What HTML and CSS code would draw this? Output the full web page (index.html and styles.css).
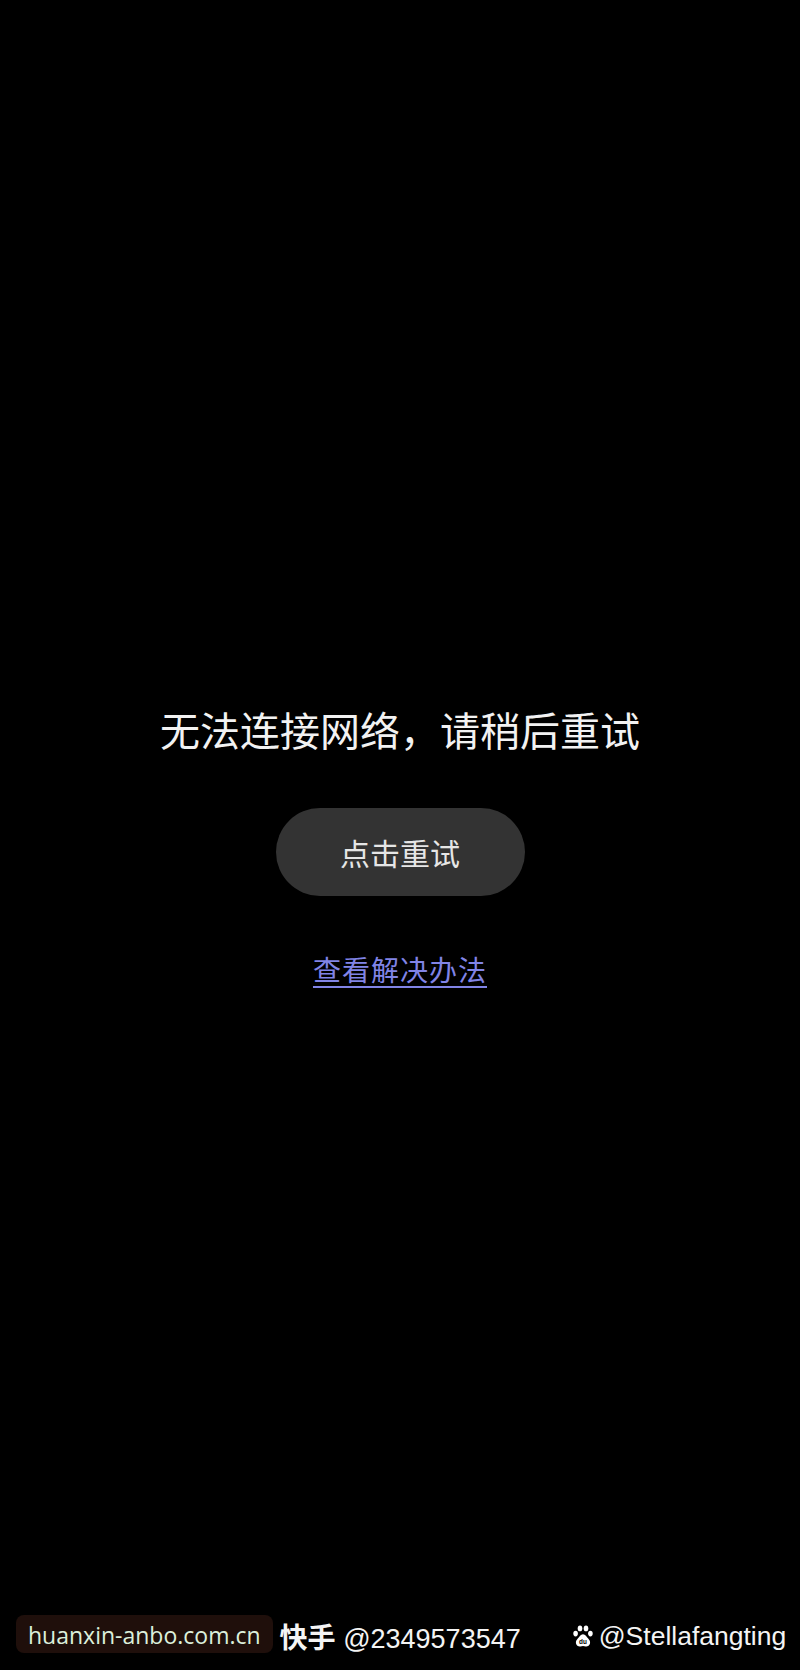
FILE: index.html
```html
<!DOCTYPE html>
<html lang="zh-CN">
<head>
<meta charset="utf-8">
<title>无法连接网络</title>
<link rel="stylesheet" href="styles.css">
</head>
<body>
<main class="page">
  <section class="error">
    <h1 class="error-title">无法连接网络，请稍后重试</h1>
    <button class="retry-btn" type="button">点击重试</button>
    <a class="help-link" href="#">查看解决办法</a>
  </section>
  <footer class="watermarks">
    <span class="site-tag">huanxin-anbo.com.cn</span>
    <span class="ks"><b class="ks-name">快手</b> @2349573547</span>
    <span class="bd">
      <svg class="bd-icon" viewBox="0 0 20 22" width="20" height="22" aria-hidden="true">
        <ellipse cx="7" cy="3.4" rx="2.3" ry="2.9" fill="#fff"/>
        <ellipse cx="13" cy="3.4" rx="2.3" ry="2.9" fill="#fff"/>
        <ellipse cx="2.6" cy="8.6" rx="2.3" ry="2.8" fill="#fff"/>
        <ellipse cx="17.4" cy="8.6" rx="2.3" ry="2.8" fill="#fff"/>
        <path d="M10 9.2c-2.4 0-3.6 2.6-5.2 4.4C3.4 15.2 2.6 16.6 3 18.6c.5 2.2 2.5 3 4.3 2.8 1-.1 1.8-.5 2.7-.5s1.7.4 2.7.5c1.8.2 3.8-.6 4.3-2.8.4-2-.4-3.4-1.8-5C13.6 11.8 12.4 9.2 10 9.2z" fill="#fff"/>
        <text x="10" y="19.4" text-anchor="middle" font-size="6.4" font-family="Liberation Sans, sans-serif" font-weight="700" fill="#000">du</text>
      </svg>@Stellafangting</span>
  </footer>
</main>
</body>
</html>
```

FILE: styles.css
```css
html, body {
  margin: 0;
  padding: 0;
  background: #000;
}

.page {
  width: 800px;
  height: 1670px;
  display: flex;
  flex-direction: column;
  align-items: center;
  font-family: "Noto Sans CJK SC", "Noto Sans", sans-serif;
  background: #000;
}

.error {
  display: flex;
  flex-direction: column;
  align-items: center;
  padding-top: 705px;
}

.error-title {
  margin: 0;
  font-size: 40px;
  line-height: 48px;
  font-weight: 400;
  color: #f2f2f2;
  letter-spacing: 0;
}

.retry-btn {
  margin-top: 55px;
  width: 249px;
  height: 88px;
  border: 0;
  border-radius: 44px;
  background: #333333;
  color: #e6e6e6;
  font-family: "Noto Sans CJK SC", sans-serif;
  font-size: 30px;
  line-height: 1;
  padding: 0;
}

.help-link {
  margin-top: 55px;
  font-size: 28px;
  line-height: 36px;
  color: #8184e6;
  text-decoration: underline;
  text-decoration-thickness: 2px;
  text-underline-offset: 5px;
  letter-spacing: 1px;
}

.watermarks {
  margin-top: auto;
  margin-bottom: 14px;
  align-self: stretch;
  display: flex;
  align-items: center;
  padding-left: 16px;
  color: #fff;
}

.site-tag {
  display: flex;
  align-items: center;
  height: 38px;
  padding: 2px 12px 0;
  box-sizing: border-box;
  border-radius: 8px;
  background: #1f0f0b;
  color: #dcefdc;
  font-family: "Open Sans", "Noto Sans", sans-serif;
  font-size: 23px;
}

.ks {
  margin-left: 7px;
  padding-top: 4px;
  font-family: "Liberation Sans", "Noto Sans CJK SC", sans-serif;
  font-size: 27px;
  color: #f4f4f4;
}

.ks-name {
  font-family: "Noto Sans CJK SC", sans-serif;
  font-weight: 700;
  font-size: 28px;
}

.bd {
  margin-left: 52px;
  padding-top: 4px;
  display: flex;
  align-items: center;
  font-family: "Liberation Sans", sans-serif;
  font-size: 26.5px;
  color: #f4f4f4;
}

.bd-icon {
  margin-right: 6px;
}
```
